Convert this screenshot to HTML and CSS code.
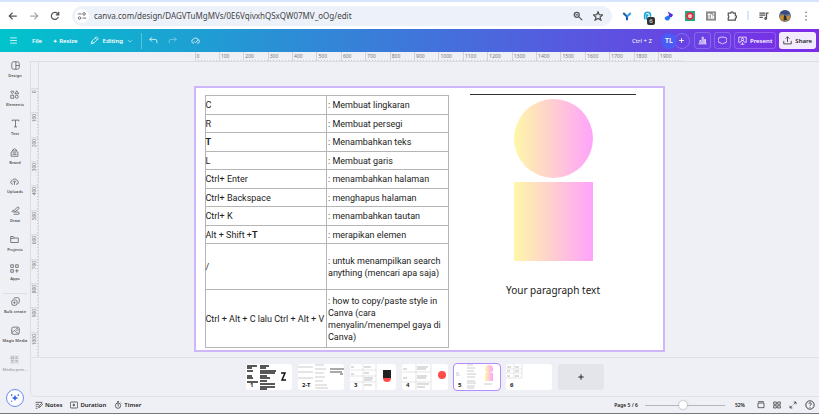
FILE: index.html
```html
<!DOCTYPE html>
<html lang="id">
<head>
    <meta charset="UTF-8">
    <meta name="viewport" content="width=device-width, initial-scale=1.0">
    <title>Canva Editor</title>
    <link rel="stylesheet" href="styles.css">
</head>
<body>
    <svg class="defs" aria-hidden="true">
        <linearGradient id="pastel"><stop offset="0" stop-color="#fff7a8"/><stop offset="1" stop-color="#ffa3fb"/></linearGradient>
        <symbol id="plus" viewBox="0 0 24 24"><path d="M12 4v16M4 12h16"/></symbol>
        <symbol id="cloud" viewBox="0 0 24 24"><path d="M8 19H7a5 5 0 0 1-1-9.900a7 7 0 0 1 13 1a4.500 4.500 0 0 1-1 8.900h-2"/></symbol>
    </svg>

    <nav class="browser-bar">
        <button class="nav-button" aria-label="Back"><svg viewBox="0 0 24 24"><path d="M21 12H4M11 4l-8 8 8 8"/></svg></button>
        <button class="nav-button faded" aria-label="Forward"><svg viewBox="0 0 24 24"><path d="M3 12h17M13 4l8 8-8 8"/></svg></button>
        <button class="nav-button" aria-label="Reload"><svg viewBox="0 0 24 24"><path d="M20 14a8.500 8.500 0 1 1-2-8l3 3M21 2v7h-7"/></svg></button>
        <div class="address">
            <button class="site-info" aria-label="Site information"><svg viewBox="0 0 24 24"><path d="M2 7h9M13 17h9"/><circle cx="17" cy="7" r="3"/><circle cx="6" cy="17" r="3"/></svg></button>
            <input type="text" aria-label="Address" value="canva.com/design/DAGVTuMgMVs/0E6VqivxhQSxQW07MV_oOg/edit">
            <button class="nav-button" aria-label="Zoom"><svg viewBox="0 0 24 24"><circle cx="9" cy="9" r="6"/><path d="M14 14l8 8M6 9h6"/></svg></button>
            <button class="nav-button" aria-label="Bookmark"><svg viewBox="0 0 24 24"><path d="M12 2l3 7 8 .500-6 5 2 7.500-7-4-7 4 2-7.500-6-5 8-.500z"/></svg></button>
        </div>
        <div class="extensions">
            <button class="nav-button" aria-label="V extension"><svg viewBox="0 0 24 24"><path d="M3 5l9 8v9" stroke="#1b5faa" stroke-width="5"/><path d="M21 5l-9 8" stroke="#2b9be8" stroke-width="5"/></svg></button>
            <button class="nav-button badged" aria-label="Ghost extension"><svg viewBox="0 0 24 24"><path d="M4 20V10a7 7 0 0 1 14 0v4M9 21V10h4" stroke="#1fa8d8" stroke-width="4"/></svg><span class="badge">6</span></button>
            <button class="nav-button" aria-label="Arrow extension"><svg viewBox="0 0 24 24"><path d="M9 1l13 8-4 6-8-1 2-5z" fill="#4a35e0" stroke="none"/><path d="M1 16l8-5 7 5-5 7-7-1z" fill="#2777ec" stroke="none"/></svg></button>
            <button class="nav-button" aria-label="Recorder"><svg viewBox="0 0 24 24"><path fill="#22a884" stroke="none" d="M0 0h24v24H0z"/><circle cx="12" cy="12" r="9" fill="#e8303a" stroke="none"/><circle cx="12" cy="12" r="3" stroke="#fff"/></svg></button>
            <button class="nav-button" aria-label="Notes extension"><svg viewBox="0 0 24 24"><path fill="#8b8b8b" stroke="none" d="M0 1h24v22H0z"/><path d="M4 8h7M7 6v11h3M13 8v9h5v-5h-5M16 7h4" stroke="#fff"/></svg></button>
            <button class="nav-button" aria-label="Extensions"><svg viewBox="0 0 24 24"><path d="M3 5h6a3 3 0 0 1 6 0h5v6a3 3 0 0 1 0 6v5H3v-6a3 3 0 0 0 0-5z"/></svg></button>
        </div>
        <div class="browser-tools">
            <button class="nav-button" aria-label="Media"><svg viewBox="0 0 24 24"><path d="M1 5h14M1 10h14M1 15h8M18 18V5h5"/><circle cx="16" cy="18" r="2"/></svg></button>
            <button class="nav-button profile" aria-label="Profile"><svg viewBox="0 0 24 24"><circle cx="12" cy="12" r="12" fill="#6f7890" stroke="none"/><path d="M2 7a11 11 0 0 1 20 0l-7 3z" fill="#394d84" stroke="none"/><path d="M1 14l7-5 5 5 9-3-1 7-9 5-8-3z" fill="#c9912b" stroke="none"/><path d="M10 10l4 2 2 8-7 1z" fill="#29313f" stroke="none"/></svg></button>
            <button class="nav-button" aria-label="Menu"><svg viewBox="0 0 24 24"><path d="M12 2v3M12 11v3M12 20v3"/></svg></button>
        </div>
    </nav>

    <header class="toolbar">
        <button class="tool" aria-label="Menu"><svg viewBox="0 0 24 24"><path d="M3 5h18M3 12h18M3 19h18"/></svg></button>
        <button class="tool file">File</button>
        <button class="tool resize"><span class="gem">✦</span>Resize</button>
        <button class="tool editing"><svg viewBox="0 0 24 24"><path d="M3 21l2-7L17 2l5 5L10 19zM14 5l5 5M5 14l5 5"/></svg>Editing<svg class="caret" viewBox="0 0 24 24"><path d="M3 8l9 8 9-8"/></svg></button>
        <div class="history">
            <button class="tool" aria-label="Undo"><svg viewBox="0 0 24 24"><path d="M8 3L2 9l6 6M2 9h14a5 5 0 0 1 5 5v5"/></svg></button>
            <button class="tool faded" aria-label="Redo"><svg viewBox="0 0 24 24"><path d="M16 3l6 6-6 6M22 9H8a5 5 0 0 0-5 5v5"/></svg></button>
            <button class="tool saved" aria-label="Saved"><svg viewBox="0 0 24 24"><use href="#cloud"/><path d="M8 14l4 4 8-9"/></svg></button>
        </div>
        <div class="actions">
            <span class="shortcut">Ctrl + Z</span>
            <div class="people">
                <button class="avatar">TL</button>
                <button class="invite" aria-label="Invite"><svg><use href="#plus"/></svg></button>
            </div>
            <button class="outlined" aria-label="Insights"><svg viewBox="0 0 24 24"><path d="M1 21h22M5 20v-8h3v8M11 20V3h3v17M17 20V9h3v11"/></svg></button>
            <button class="outlined" aria-label="Comments"><svg viewBox="0 0 24 24"><path d="M8 3h8a8 8 0 0 1 0 16h-1l-3 3-3-3H8A8 8 0 0 1 8 3z"/></svg></button>
            <button class="outlined"><svg viewBox="0 0 24 24"><path d="M6 17H2V3h20v14h-4M12 17v5M7 22h10"/><circle cx="12" cy="9" r="3"/><path d="M7 17a5 5 0 0 1 10 0"/></svg>Present</button>
            <button class="share"><svg viewBox="0 0 24 24"><path d="M2 13v8h20v-8M12 16V2M7 7l5-5 5 5"/></svg>Share</button>
        </div>
    </header>

    <div class="editor">
        <aside class="sidebar">
            <button class="side-item"><svg viewBox="0 0 24 24"><rect x="2" y="2" width="20" height="20" rx="5"/><path d="M13 2v20M13 12h9"/></svg>Design</button>
            <button class="side-item"><svg viewBox="0 0 24 24"><path d="M6 10C-1 5 4 0 6 4c3-4 7 1 0 6zM18 2l5 8H13zM2 14h8v8H2z"/><circle cx="18" cy="18" r="4"/></svg>Elements</button>
            <button class="side-item"><svg viewBox="0 0 24 24"><path d="M3 6V3h18v3M12 3v18M8 21h8"/></svg>Text</button>
            <button class="side-item"><svg viewBox="0 0 24 24"><path d="M3 22V11l4-3h10l4 3v11zM7 8V5l5-3 5 3v3M7 13h10M7 17h10"/></svg>Brand</button>
            <button class="side-item"><svg viewBox="0 0 24 24"><use href="#cloud"/><path d="M12 21V11M8 14l4-4 4 4"/></svg>Uploads</button>
            <button class="side-item"><svg viewBox="0 0 24 24"><path d="M8 12L18 2l4 4-11 9zM8 12c-5-1-7 4-3 4h14c4 0 4 6 0 6H7"/></svg>Draw</button>
            <button class="side-item"><svg viewBox="0 0 24 24"><path d="M2 20V4h7l3 4h10v12zM2 9h10"/></svg>Projects</button>
            <button class="side-item"><svg viewBox="0 0 24 24"><path d="M2 2h7v7H2zM15 2h7v7h-7zM2 15h7v7H2zM18 14v9M14 18h9"/></svg>Apps</button>
            <hr>
            <button class="side-item"><svg viewBox="0 0 24 24"><rect x="2" y="8" width="14" height="14" rx="4"/><path d="M7 5c1-3 3-3 5-3h6c3 0 4 2 4 4v7c0 2-1 4-3 4M9 12v6M6 15h6"/></svg>Bulk create</button>
            <button class="side-item"><svg viewBox="0 0 24 24"><rect x="2" y="3" width="20" height="19" rx="4"/><path d="M2 18l7-6 11 9M13 9l3-3 3 3-3 3z"/></svg>Magic Media</button>
            <button class="side-item faded"><svg viewBox="0 0 24 24"><path fill="#ddd" stroke="none" d="M0 0h24v24H0z"/><path d="M3 5h7v5H3zM14 5h7M14 9h7M3 15h7M3 19h7M14 14l7 5M21 14l-7 5"/></svg>Media pem...</button>
            <button class="magic" aria-label="Magic assistant"><svg viewBox="0 0 24 24"><path d="M12 5q1 6 8 7-7 1-8 7-1-6-8-7 7-1 8-7z" fill="#3467e8" stroke="none"/><path d="M4 3v4M2 5h4M20 3v4M18 5h4M4 18v4"/></svg></button>
        </aside>

        <main class="workspace">
            <div class="ruler-top">
                <div class="marks"><span>0</span><span>100</span><span>200</span><span>300</span><span>400</span><span>500</span><span>600</span><span>700</span><span>800</span><span>900</span><span>1000</span><span>1100</span><span>1200</span><span>1300</span><span>1400</span><span>1500</span><span>1600</span><span>1700</span><span>1800</span><span>1900</span></div>
            </div>
            <div class="stage">
                <div class="ruler-left">
                    <div class="marks"><span>0</span><span>100</span><span>200</span><span>300</span><span>400</span><span>500</span><span>600</span><span>700</span><span>800</span><span>900</span><span>1000</span></div>
                </div>
                <div class="canvas">
                    <section class="page">
                        <table>
                            <tr><td>C</td><td>: Membuat lingkaran</td></tr>
                            <tr><td>R</td><td>: Membuat persegi</td></tr>
                            <tr><td><b>T</b></td><td>: Menambahkan teks</td></tr>
                            <tr><td>L</td><td>: Membuat garis</td></tr>
                            <tr><td>Ctrl+ Enter</td><td>: menambahkan halaman</td></tr>
                            <tr><td>Ctrl+ Backspace</td><td>: menghapus halaman</td></tr>
                            <tr><td>Ctrl+ K</td><td>: menambahkan tautan</td></tr>
                            <tr><td>Alt + Shift +<b>T</b></td><td>: merapikan elemen</td></tr>
                            <tr class="two-lines"><td>/</td><td>: untuk menampilkan search anything (mencari apa saja)</td></tr>
                            <tr class="four-lines"><td>Ctrl + Alt + C lalu Ctrl + Alt + V</td><td>: how to copy/paste style in Canva (cara menyalin/menempel gaya di Canva)</td></tr>
                        </table>
                        <div class="shapes">
                            <div class="line"></div>
                            <div class="shape circle"></div>
                            <div class="shape"></div>
                            <p>Your paragraph text</p>
                        </div>
                    </section>
                </div>
            </div>

            <div class="thumbs">
                <button class="thumb"><svg viewBox="0 0 46 26"><path d="M1 2h10M1 4h5M1 7h6M1 12h5M1 14h6M1 18h11M14 2h9M14 4h6M14 7h16M14 9h15M14 12h7M14 14h10M14 17h7M14 20h15M14 23h15M14 25h7" stroke="#222" stroke-width="1.500"/><path d="M35 9h4l-3 7h4" stroke="#111" stroke-width="1.500"/></svg><span>1</span></button>
                <button class="thumb"><svg viewBox="0 0 46 26"><path d="M0 3h15M0 8h15M0 14h15M17 1h9M17 5h11M17 9h9M17 13h10M17 17h8M17 21h12M17 24h13" stroke="#ccc"/><path d="M32 5h14M32 8h12M42 10h3" stroke="#555"/></svg><span>2-T</span></button>
                <button class="thumb"><svg viewBox="0 0 46 26"><path d="M0 6h26M0 12h26M0 18h26M13 0v26M26 0v26" stroke="#e5e5e5"/><path d="M1 3h3M1 10h3M14 3h7M14 9h5M14 14h9M14 16h8M14 21h8" stroke="#bbb"/><circle cx="37" cy="14" r="4" fill="#ff4b4b" stroke="none"/><path d="M33 6h8v8h-8z" fill="#222" stroke="none"/></svg><span>3</span></button>
                <button class="thumb"><svg viewBox="0 0 46 26"><path d="M0 8h29M0 18h29M14 0v26M29 0v26" stroke="#e5e5e5"/><path d="M1 5h4M1 14h4M15 3h11M15 5h9M15 12h10M15 14h9M15 20h12M15 23h8" stroke="#bbb"/><circle cx="40" cy="11" r="4" fill="#ff4b4b" stroke="none"/></svg><span>4</span></button>
                <button class="thumb current"><svg viewBox="0 0 46 26"><path d="M2 9h3M2 11h4M13 1h6M13 4h8M13 7h7M13 10h9M13 13h8M13 17h8M13 19h9M13 22h8M13 24h7M30 20h8" stroke="#ccc"/><circle cx="35" cy="5" r="4" fill="url(#pastel)" stroke="none"/><path d="M31 9h8v8h-8z" fill="url(#pastel)" stroke="none"/></svg><span>5</span></button>
                <button class="thumb"><svg viewBox="0 0 46 26"><path d="M0 5h16M0 9h16M0 14h16M8 0v14M16 0v14" stroke="#e5e5e5"/><path d="M1 3h4M9 3h4M1 7h3M9 7h4M1 12h3M9 12h4" stroke="#bbb"/></svg><span>6</span></button>
                <button class="thumb add" aria-label="Add page"><svg><use href="#plus"/></svg></button>
            </div>

            <footer class="footer">
                <button class="foot-item"><svg viewBox="0 0 24 24"><path d="M2 4h20M2 10h10M2 16h6M11 20l1-5 8-8 3 3-8 8zM2 22h5"/></svg>Notes</button>
                <button class="foot-item"><svg viewBox="0 0 24 24"><rect x="1" y="3" width="22" height="18" rx="3"/><path d="M10 9l5 3-5 3z"/></svg>Duration</button>
                <button class="foot-item"><svg viewBox="0 0 24 24"><circle cx="12" cy="14" r="8"/><path d="M12 9v5l3 2M9 2h6M12 2v4M20 5l2 2"/></svg>Timer</button>
                <label class="page-count" for="zoom">Page 5 / 6</label>
                <input id="zoom" type="range" min="0" max="100" value="47">
                <span class="percent">52%</span>
                <button class="foot-item" aria-label="Scroll view"><svg viewBox="0 0 24 24"><path d="M3 6h18v14H3zM3 2h18"/></svg></button>
                <button class="foot-item" aria-label="Grid view"><svg viewBox="0 0 24 24"><path d="M2 3h8v7H2zM14 3h8v7h-8zM2 14h8v7H2zM14 14h8v7h-8z"/></svg></button>
                <button class="foot-item" aria-label="Full screen"><svg viewBox="0 0 24 24"><path d="M14 3h7v7M21 3l-7 7M10 21H3v-7M3 21l7-7"/></svg></button>
                <button class="foot-item help" aria-label="Help"><svg viewBox="0 0 24 24"><circle cx="12" cy="12" r="10"/><path d="M9 9c1-4 7-2 6 1-1 2-3 2-3 4M12 17v2"/></svg></button>
            </footer>
        </main>
    </div>
</body>
</html>
```

FILE: styles.css
```css
* {
    box-sizing: border-box;
}
body {
    margin: 0;
    min-height: 100vh;
    display: flex;
    flex-direction: column;
    font-family: "Noto Sans", sans-serif;
    font-size: 6px;
    color: #222;
    background: #eff0f5;
    border-bottom: 1px solid #77777c;
}
button {
    display: flex;
    align-items: center;
    justify-content: center;
    padding: 0;
    border: none;
    background: none;
    font: inherit;
    color: inherit;
    cursor: pointer;
}
svg {
    width: 10px;
    height: 10px;
    flex: none;
    fill: none;
    stroke: currentColor;
    stroke-width: 2;
}
.defs {
    position: absolute;
    width: 0;
    height: 0;
}
.faded {
    opacity: 0.5;
}

/* browser bar */
.browser-bar {
    height: 29px;
    display: flex;
    align-items: center;
    padding: 0 7px;
    background: white;
    border-top: 2px solid #d6e4fc;
    color: #555;
}
.nav-button {
    width: 12px;
    height: 20px;
    margin-right: 9px;
}
.nav-button svg {
    stroke-width: 3;
}
.address {
    flex: 1;
    display: flex;
    align-items: center;
    height: 20px;
    margin-left: 2px;
    padding-left: 3px;
    border-radius: 10px;
    background: #edf1fa;
}
.address .nav-button {
    margin-right: 8px;
}
.site-info {
    width: 14px;
    height: 14px;
    border-radius: 50%;
    background: white;
}
.address input {
    flex: 1;
    min-width: 0;
    padding: 0 5px;
    border: none;
    background: none;
    font: 8px "Noto Sans", sans-serif;
    color: #444;
}
.extensions, .browser-tools {
    display: flex;
    align-items: center;
}
.extensions {
    margin-left: 9px;
}
.badged {
    position: relative;
}
.badge {
    position: absolute;
    right: -1px;
    bottom: 1px;
    width: 8px;
    height: 8px;
    border-radius: 2px;
    background: #333;
    color: white;
    line-height: 8px;
}
.browser-tools {
    padding-left: 9px;
    border-left: 2px solid #d6e4fc;
    height: 9px;
}
.profile svg {
    width: 12px;
    height: 12px;
}
.browser-tools .nav-button:last-child {
    margin-right: 0;
}

/* canva toolbar */
.toolbar {
    height: 23px;
    display: flex;
    align-items: center;
    padding: 0 3px 0 9px;
    background: linear-gradient(90deg, #00c4cc, #7d2ae8);
    color: white;
    font-weight: 600;
}
.toolbar svg {
    width: 9px;
    height: 9px;
}
.tool {
    height: 16px;
}
.file {
    margin-left: 14px;
}
.resize {
    margin-left: 11px;
    gap: 2px;
}
.gem {
    font-size: 5px;
}
.editing {
    gap: 4px;
    margin-left: 12px;
}
.toolbar .caret {
    width: 6px;
    height: 6px;
}
.history {
    display: flex;
    gap: 10px;
    margin-left: 8px;
    padding-left: 7px;
    border-left: 1px solid rgba(255, 255, 255, 0.3);
}
.saved {
    margin-left: 4px;
}
.actions {
    display: flex;
    align-items: center;
    gap: 3px;
    margin-left: auto;
}
.shortcut {
    margin-right: 6px;
    font-weight: 400;
}
.people {
    display: flex;
    margin-right: 1px;
}
.avatar {
    width: 16px;
    height: 16px;
    border-radius: 50%;
    background: #4a5cf5;
    font-size: 7px;
    z-index: 1;
}
.invite {
    width: 16px;
    height: 16px;
    margin-left: -3px;
    border: 1px solid rgba(255, 255, 255, 0.2);
    border-radius: 50%;
}
.toolbar .invite svg {
    width: 7px;
    height: 7px;
    stroke-width: 3;
}
.outlined, .share {
    height: 17px;
    padding: 0 3px;
    gap: 3px;
    border: 1px solid rgba(255, 255, 255, 0.2);
    border-radius: 3px;
}
.share {
    background: #f2eafd;
    color: #222;
}

/* editor */
.editor {
    flex: 1;
    display: flex;
}
.sidebar {
    width: 30px;
    flex: none;
    display: flex;
    flex-direction: column;
    align-items: center;
    padding-top: 9px;
    color: #555;
}
.side-item {
    flex-direction: column;
    justify-content: flex-start;
    gap: 3px;
    height: 29px;
    font-size: 4px;
    font-weight: 600;
    white-space: nowrap;
}
.side-item svg {
    width: 9px;
    height: 9px;
}
.sidebar hr {
    width: 24px;
    margin: 0 0 3px;
    border: none;
    border-top: 1px solid #dcdde2;
}
.magic {
    width: 18px;
    height: 18px;
    margin-top: auto;
    margin-bottom: 6px;
    border: 1px solid #6c8df0;
    border-radius: 50%;
    background: white;
    color: #3467e8;
}
.workspace {
    flex: 1;
    min-width: 0;
    display: flex;
    flex-direction: column;
}
.ruler-top {
    height: 10px;
    padding-left: calc(50% - 230px);
    border-bottom: 1px solid #dcdde2;
    overflow: hidden;
    font-size: 5px;
    line-height: 8px;
    color: #777;
}
.ruler-top .marks {
    display: grid;
    grid-template-columns: repeat(20, 1fr);
    width: 488px;
    height: 9px;
    background: repeating-linear-gradient(90deg, #ccc 0 1px, transparent 1px 3px) bottom / 100% 1px no-repeat;
}
.ruler-top span {
    padding-left: 1px;
    border-left: 1px solid #d2d3d8;
}
.stage {
    flex: 1;
    display: flex;
}
.ruler-left {
    width: 9px;
    flex: none;
    padding-top: 26px;
    border: solid #dcdde2;
    border-width: 0 1px;
    font-size: 5px;
    line-height: 7px;
    color: #777;
}
.ruler-left .marks {
    display: grid;
    grid-template-rows: repeat(11, 1fr);
    height: 268px;
    background: repeating-linear-gradient(#ccc 0 1px, transparent 1px 3px) right / 1px 100% no-repeat;
}
.ruler-left span {
    padding-bottom: 1px;
    border-bottom: 1px solid #d2d3d8;
    writing-mode: vertical-rl;
    transform: rotate(180deg);
    text-align: right;
}
.canvas {
    flex: 1;
    padding: 24px 5px 5px;
}
.page {
    max-width: 471px;
    margin: 0 auto;
    padding: 6px 5px 2px 9px;
    display: flex;
    border: 2px solid #ceb6fb;
    background: white;
    color: #222;
}
.page table {
    width: 244px;
    margin-top: 1px;
    table-layout: fixed;
    border-collapse: collapse;
    font-family: Roboto, sans-serif;
    font-size: 9px;
    line-height: 12px;
}
.page td {
    height: 19px;
    padding: 0 1px;
    border: 1px solid #b5b5b5;
}
.page tr:nth-child(even) td {
    height: 18px;
}
.page td:first-child {
    padding: 0;
    white-space: nowrap;
}
.page .two-lines td {
    height: 46px;
}
.page tr.four-lines:last-child td {
    height: 58px;
}
.shapes {
    flex: 1;
    display: flex;
    flex-direction: column;
    align-items: center;
}
.line {
    width: 166px;
    height: 1px;
    margin-bottom: 4px;
    background: #333;
}
.shape {
    width: 79px;
    height: 79px;
    margin-bottom: 4px;
    background: linear-gradient(90deg, #fff7a8, #ffa3fb);
}
.circle {
    border-radius: 50%;
}
.shapes p {
    margin: 18px 0 0;
    font-size: 10px;
    line-height: 14px;
}

/* page strip */
.thumbs {
    height: 40px;
    display: flex;
    align-items: center;
    justify-content: center;
    gap: 6px;
    border: solid #e0e1e6;
    border-width: 1px 0 1px 1px;
    border-bottom-left-radius: 5px;
}
.thumb {
    position: relative;
    width: 46px;
    height: 26px;
    overflow: hidden;
    border-radius: 3px;
    background: white;
}
.thumb svg {
    width: 46px;
    height: 26px;
    stroke-width: 1;
}
.thumb span {
    position: absolute;
    left: 4px;
    bottom: 1px;
    font-weight: 700;
    line-height: 7px;
}
.current {
    outline: 1px solid #b48bfa;
}
.add {
    background: #e4e5ea;
}
.thumb.add svg {
    width: 8px;
    height: 8px;
    stroke-width: 3;
}

/* footer */
.footer {
    height: 16px;
    display: flex;
    align-items: center;
    padding: 0 4px 0 5px;
    font-weight: 600;
}
.foot-item {
    gap: 2px;
    margin-right: 8px;
}
.foot-item svg {
    width: 8px;
    height: 8px;
}
.page-count {
    margin-left: auto;
    font-size: 5px;
}
.footer input {
    appearance: none;
    width: 80px;
    height: 8px;
    margin: 0 10px 0 7px;
    background: linear-gradient(#b5b6bc, #b5b6bc) center / 100% 1px no-repeat;
}
.footer input::-webkit-slider-thumb {
    appearance: none;
    width: 8px;
    height: 8px;
    border-radius: 50%;
    background: white;
    box-shadow: 0 0 2px #888;
}
.percent {
    margin-right: 12px;
    font-size: 5px;
}
.help {
    margin-right: 0;
}
.help svg {
    width: 10px;
    height: 10px;
}
```
